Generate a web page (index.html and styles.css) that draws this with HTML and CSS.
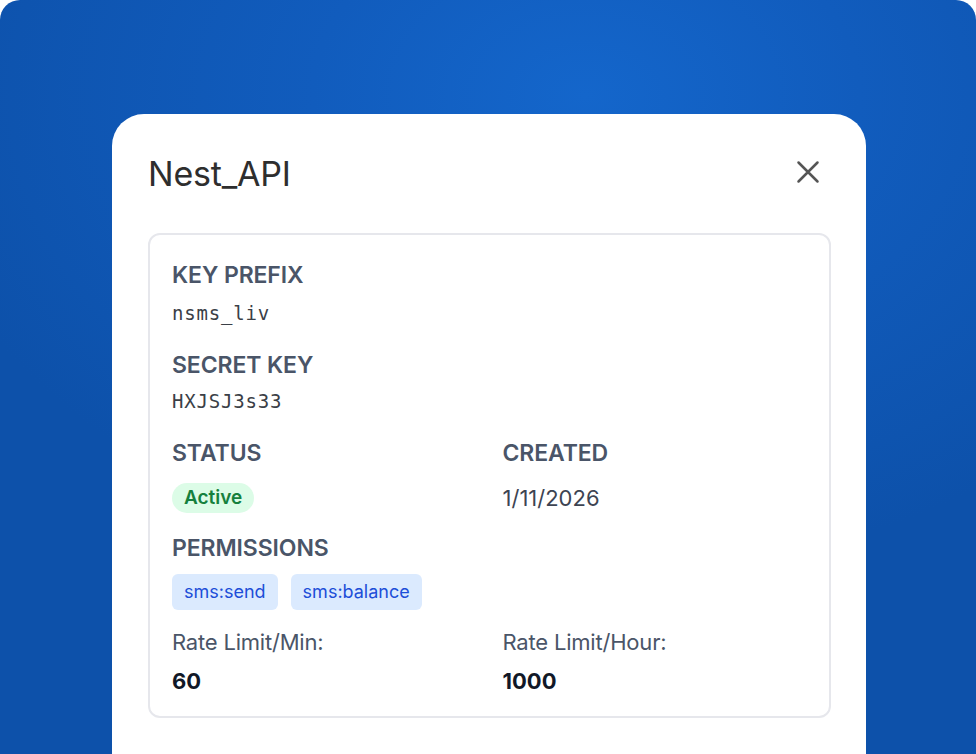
FILE: index.html
```html
<!DOCTYPE html>
<html lang="en">
<head>
<meta charset="utf-8">
<title>Nest_API</title>
<link rel="stylesheet" href="styles.css">
</head>
<body>
<div class="stage">
  <section class="modal">
    <header class="modal-head">
      <h1 class="modal-title">Nest_API</h1>
      <button class="close-btn" aria-label="Close">
        <svg width="24" height="24" viewBox="0 0 24 24" fill="none" stroke="#555" stroke-width="2.5" stroke-linecap="round">
          <path d="M2.5 2.5L21.5 21.5M21.5 2.5L2.5 21.5"/>
        </svg>
      </button>
    </header>
    <div class="details">
      <div class="field full">
        <div class="label">KEY PREFIX</div>
        <div class="mono">nsms_liv</div>
      </div>
      <div class="field full gap22">
        <div class="label">SECRET KEY</div>
        <div class="mono mono-tight">HXJSJ3s33</div>
      </div>
      <div class="field gap22">
        <div class="label">STATUS</div>
        <span class="badge">Active</span>
      </div>
      <div class="field gap22">
        <div class="label">CREATED</div>
        <div class="value">1/11/2026</div>
      </div>
      <div class="field full gap20">
        <div class="label">PERMISSIONS</div>
        <div class="chips">
          <span class="chip">sms:send</span>
          <span class="chip">sms:balance</span>
        </div>
      </div>
      <div class="field gap17">
        <div class="sub">Rate Limit/Min:</div>
        <div class="num">60</div>
      </div>
      <div class="field gap17">
        <div class="sub">Rate Limit/Hour:</div>
        <div class="num">1000</div>
      </div>
    </div>
  </section>
</div>
</body>
</html>
```
FILE: styles.css
```css
* { box-sizing: border-box; }
html, body { margin: 0; padding: 0; background: #fff; }
body {
  width: 976px;
  height: 754px;
  overflow: hidden;
  font-family: Inter, "Noto Sans", sans-serif;
}
.stage {
  height: 800px;
  border-radius: 20px 20px 0 0;
  background:
    radial-gradient(ellipse 70% 60% at 60% 12%, #1466cb 0%, #115cbd 40%, #0d51aa 100%);
  padding: 114px 110px 0 112px;
}
.modal {
  background: #fff;
  border-radius: 32px 32px 0 0;
  height: 700px;
  padding: 36px 35px 0 36px;
}
.modal-head {
  display: flex;
  align-items: center;
  justify-content: space-between;
  height: 48px;
  margin-bottom: 35px;
}
.modal-title {
  margin: 0;
  font-size: 34px;
  font-weight: 400;
  color: #2e2e2e;
  letter-spacing: -0.2px;
  position: relative;
  top: -1px;
}
.close-btn {
  background: none;
  border: 0;
  padding: 0;
  margin-right: 11px;
  width: 24px;
  height: 24px;
  display: flex;
  position: relative;
  top: -2px;
}
.details {
  border: 2px solid #e6e7ec;
  border-radius: 12px;
  padding: 25px 22px 20px 22px;
  display: grid;
  grid-template-columns: 1fr 1fr;
  column-gap: 26px;
}
.field.full { grid-column: 1 / -1; }
.gap22 { margin-top: 22px; }
.gap20 { margin-top: 20px; }
.gap17 { margin-top: 17px; }
.label {
  font-size: 23px;
  font-weight: 600;
  color: #4a5568;
  letter-spacing: -0.1px;
  line-height: 30px;
}
.mono {
  font-family: "DejaVu Sans Mono", monospace;
  font-size: 19px;
  letter-spacing: 0.8px;
  color: #3b3f47;
  line-height: 30px;
  margin-top: 8px;
}
.mono-tight { margin-top: 6px; }
.value {
  font-size: 22px;
  color: #3d4452;
  letter-spacing: 0;
  line-height: 30px;
  margin-top: 15px;
}
.badge {
  display: inline-block;
  margin-top: 15px;
  background: #dcfce7;
  color: #15803d;
  font-weight: 600;
  font-size: 19px;
  line-height: 30px;
  padding: 0 12px;
  border-radius: 15px;
}
.chips { display: flex; gap: 13px; margin-top: 11px; }
.chip {
  background: #dbeafe;
  color: #1d4ed8;
  font-size: 18px;
  line-height: 36px;
  padding: 0 12px;
  border-radius: 6px;
}
.sub {
  font-size: 22px;
  color: #4a5568;
  letter-spacing: -0.2px;
  line-height: 30px;
}
.num {
  font-size: 22px;
  font-weight: 700;
  color: #111827;
  line-height: 30px;
  margin-top: 9px;
}
```
